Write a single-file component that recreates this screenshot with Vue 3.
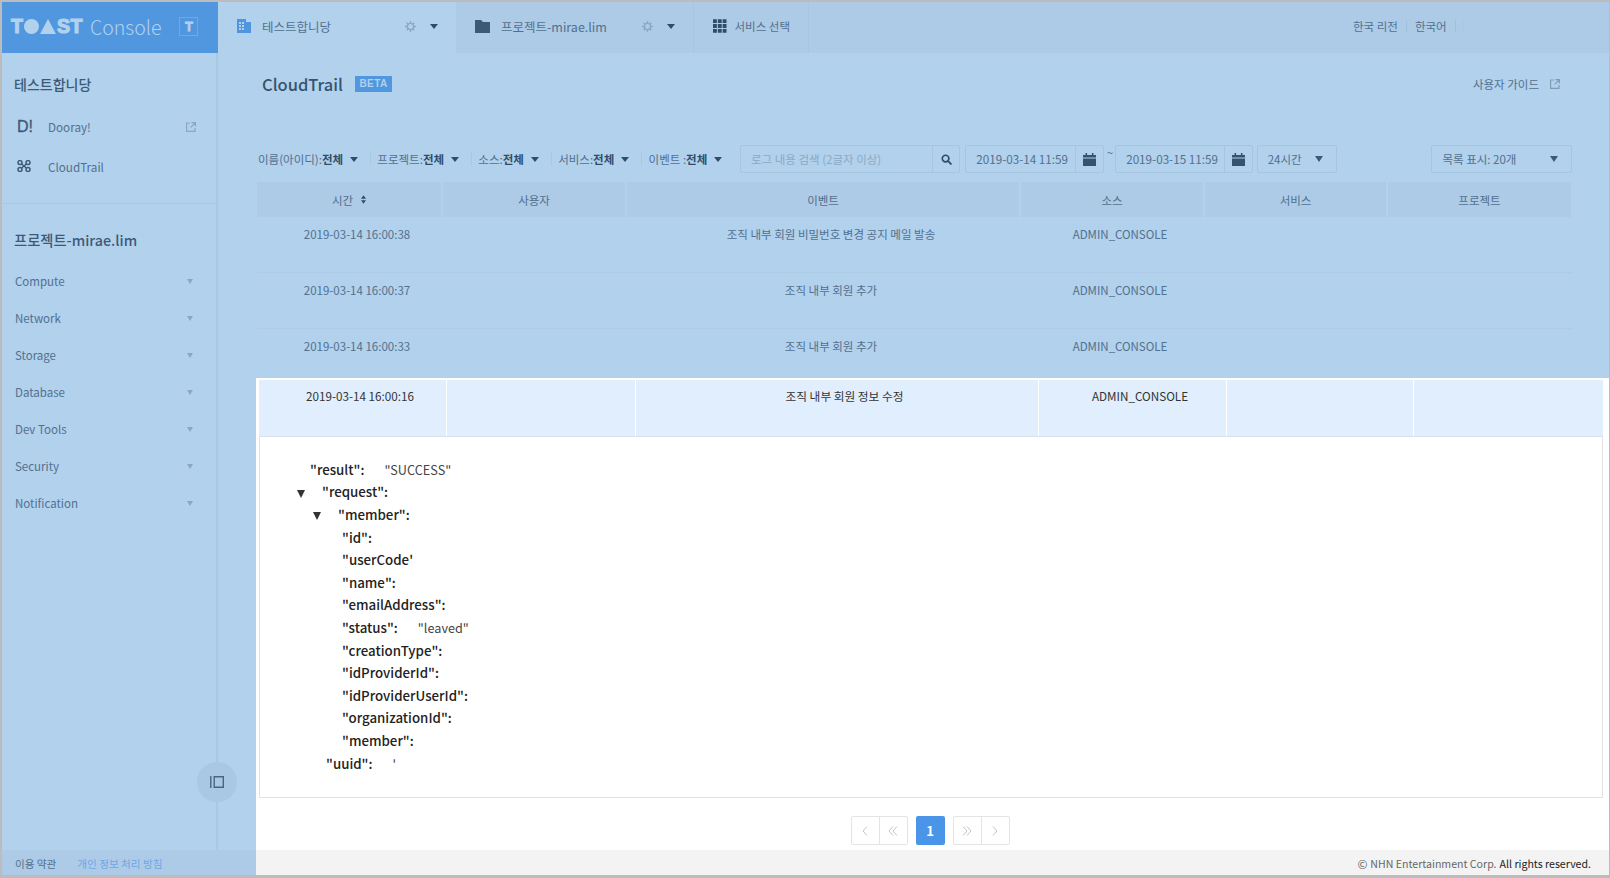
<script setup>
const tabs = [
  { name: '테스트합니당', kind: 'org' },
  { name: '프로젝트-mirae.lim', kind: 'folder' }
]

const menus = ['Compute', 'Network', 'Storage', 'Database', 'Dev Tools', 'Security', 'Notification']

const filters = [
  { label: '이름(아이디):', value: '전체' },
  { label: '프로젝트:', value: '전체' },
  { label: '소스:', value: '전체' },
  { label: '서비스:', value: '전체' },
  { label: '이벤트 :', value: '전체' }
]

const columns = ['시간', '사용자', '이벤트', '소스', '서비스', '프로젝트']

const rows = [
  { time: '2019-03-14 16:00:38', event: '조직 내부 회원 비밀번호 변경 공지 메일 발송' },
  { time: '2019-03-14 16:00:37', event: '조직 내부 회원 추가' },
  { time: '2019-03-14 16:00:33', event: '조직 내부 회원 추가' }
]

const jsonLines = [
  { left: 50, key: '"result":', value: '"SUCCESS"' },
  { left: 37, key: '"request":', arrow: true },
  { left: 53, key: '"member":', arrow: true },
  { left: 82, key: '"id":' },
  { left: 82, key: '"userCode\'' },
  { left: 82, key: '"name":' },
  { left: 82, key: '"emailAddress":' },
  { left: 82, key: '"status":', value: '"leaved"' },
  { left: 82, key: '"creationType":' },
  { left: 82, key: '"idProviderId":' },
  { left: 82, key: '"idProviderUserId":' },
  { left: 82, key: '"organizationId":' },
  { left: 82, key: '"member":' },
  { left: 66, key: '"uuid":', value: '\'' }
]
</script>

<template>
  <div class="frame">
    <header class="topbar">
      <div class="logo">
        <div class="logo-mark">
          <span>T</span><i class="dot"></i><i class="tri"></i><span>ST</span>
        </div>
        <span class="logo-text">Console</span>
        <span class="logo-box">T</span>
      </div>

      <div v-for="(tab, i) in tabs" :key="tab.name" class="tab" :class="{ 'tab-on': i === 0 }">
        <svg v-if="tab.kind === 'org'" class="tab-icon" viewBox="0 0 14 14" width="14" height="14">
          <path fill="#4f96df" d="M0 0h9v3h5v11H0z" />
          <path fill="#b2d1ec" d="M2 3h2v2H2zM5 3h2v2H5zM2 6h2v2H2zM5 6h2v2H5zM2 9h2v2H2zM5 9h2v2H5z" />
        </svg>
        <svg v-else class="tab-icon" viewBox="0 0 15 13" width="15" height="13">
          <path fill="#3c5a78" d="M0 0h6l2 2h7v11H0z" />
        </svg>
        <span class="tab-name">{{ tab.name }}</span>
        <svg class="gear" viewBox="0 0 12 12" width="11" height="11">
          <circle cx="6" cy="6" r="3.4" fill="none" stroke="#8aa7c3" stroke-width="1.5" />
          <path stroke="#8aa7c3" stroke-width="1.4" d="M6 0v2.4M6 9.6V12M0 6h2.4M9.6 6H12M1.8 1.8l1.7 1.7M8.5 8.5l1.7 1.7M1.8 10.2l1.7-1.7M8.5 3.5l1.7-1.7" />
        </svg>
        <i class="caret"></i>
      </div>

      <div class="tab tab-services">
        <svg viewBox="0 0 14 14" width="14" height="14">
          <path fill="#2f4d6b" d="M0 0h4v4H0zM5 0h4v4H5zM10 0h4v4h-4zM0 5h4v4H0zM5 5h4v4H5zM10 5h4v4h-4zM0 10h4v4H0zM5 10h4v4H5zM10 10h4v4h-4z" />
        </svg>
        <span>서비스 선택</span>
      </div>

      <div class="top-right">
        <span>한국 리전</span>
        <i class="top-sep"></i>
        <span>한국어</span>
        <i class="top-sep"></i>
        <i class="top-sep faint"></i>
      </div>
    </header>

    <div class="body">
      <aside class="sidebar">
        <h2 class="side-title">테스트합니당</h2>
        <ul class="side-links">
          <li>
            <span class="side-ico dooray">D!</span>
            <span class="side-label">Dooray!</span>
            <svg class="ext" viewBox="0 0 10 10" width="10" height="10">
              <path fill="none" stroke="#89a6c2" stroke-width="1.2" d="M4 1H.6v8.4H9V6M5.5.6h3.9v3.9M9.2.8L4.6 5.4" />
            </svg>
          </li>
          <li>
            <svg class="side-ico" viewBox="0 0 14 12" width="14" height="12">
              <g fill="none" stroke="#3c5a78" stroke-width="1.5">
                <circle cx="3" cy="2.6" r="2" />
                <circle cx="11" cy="2.6" r="2" />
                <circle cx="3" cy="9.4" r="2" />
                <circle cx="11" cy="9.4" r="2" />
                <path d="M4.6 4l4.8 4M9.4 4L4.6 8" />
              </g>
            </svg>
            <span class="side-label">CloudTrail</span>
          </li>
        </ul>
        <div class="side-divider"></div>
        <h2 class="side-title project">프로젝트-mirae.lim</h2>
        <ul class="side-menu">
          <li v-for="menu in menus" :key="menu">
            <span>{{ menu }}</span>
            <i class="caret side-caret"></i>
          </li>
        </ul>
        <button class="side-toggle" type="button">
          <svg viewBox="0 0 14 12" width="14" height="12">
            <path fill="none" stroke="#486684" stroke-width="1.4" d="M.8 0v12M4.2.7h9.1v10.6H4.2z" />
          </svg>
        </button>
      </aside>

      <main class="main">
        <div class="title-row">
          <h1>CloudTrail</h1>
          <span class="beta">BETA</span>
          <span class="guide">사용자 가이드</span>
          <svg class="guide-ext" viewBox="0 0 10 10" width="10" height="10">
            <path fill="none" stroke="#7f9cb8" stroke-width="1.2" d="M4 1H.6v8.4H9V6M5.5.6h3.9v3.9M9.2.8L4.6 5.4" />
          </svg>
        </div>

        <div class="toolbar">
          <div class="filters">
            <div v-for="f in filters" :key="f.label" class="filter">
              <span>{{ f.label }}<b>{{ f.value }}</b></span>
              <i class="caret"></i>
            </div>
          </div>

          <div class="field search">
            <span class="placeholder">로그 내용 검색 (2글자 이상)</span>
            <span class="field-btn">
              <svg viewBox="0 0 12 12" width="11" height="11">
                <circle cx="5" cy="5" r="3.6" fill="none" stroke="#2f4d6b" stroke-width="1.8" />
                <path stroke="#2f4d6b" stroke-width="2" d="M7.8 7.8L11.4 11.4" />
              </svg>
            </span>
          </div>

          <div class="field date date-from">
            <span class="date-text">2019-03-14 11:59</span>
            <span class="field-btn">
              <svg viewBox="0 0 13 13" width="13" height="13">
                <path fill="#35536f" d="M0 2h2.5V0h1.6v2h4.8V0h1.6v2H13v2.6H0zM0 5.4h13V13H0z" />
              </svg>
            </span>
          </div>
          <span class="tilde">~</span>
          <div class="field date">
            <span class="date-text">2019-03-15 11:59</span>
            <span class="field-btn">
              <svg viewBox="0 0 13 13" width="13" height="13">
                <path fill="#35536f" d="M0 2h2.5V0h1.6v2h4.8V0h1.6v2H13v2.6H0zM0 5.4h13V13H0z" />
              </svg>
            </span>
          </div>

          <div class="field select range">
            <span>24시간</span>
            <i class="caret big"></i>
          </div>
          <div class="field select perpage">
            <span>목록 표시: 20개</span>
            <i class="caret big"></i>
          </div>
        </div>

        <div class="table-head">
          <div v-for="(col, i) in columns" :key="col" class="head-cell">
            {{ col }}
            <svg v-if="i === 0" class="sort" viewBox="0 0 6 10" width="5" height="9">
              <path fill="#2f4d6b" d="M3 0l3 4H0zM3 10L0 6h6z" />
            </svg>
          </div>
        </div>

        <div class="rows">
          <div v-for="row in rows" :key="row.time + row.event" class="row">
            <span>{{ row.time }}</span>
            <span></span>
            <span>{{ row.event }}</span>
            <span>ADMIN_CONSOLE</span>
            <span></span>
            <span></span>
          </div>
        </div>

        <section class="detail">
          <div class="sel-row">
            <span>2019-03-14 16:00:16</span>
            <span></span>
            <span>조직 내부 회원 정보 수정</span>
            <span>ADMIN_CONSOLE</span>
            <span></span>
            <span></span>
          </div>

          <div class="json">
            <div v-for="(line, i) in jsonLines" :key="i" class="json-line" :style="{ paddingLeft: line.left + 'px' }">
              <i v-if="line.arrow" class="json-arrow"></i>
              <b>{{ line.key }}</b>
              <span v-if="line.value" class="json-value">{{ line.value }}</span>
            </div>
          </div>

          <nav class="pager">
            <div class="pager-group">
              <span class="pager-btn">
                <svg viewBox="0 0 6 10" width="6" height="10"><path fill="none" stroke="#c4c4c4" d="M5 .5L1 5l4 4.5" /></svg>
              </span>
              <span class="pager-btn">
                <svg viewBox="0 0 10 10" width="10" height="10"><path fill="none" stroke="#c4c4c4" d="M5 .5L1 5l4 4.5M9 .5L5 5l4 4.5" /></svg>
              </span>
            </div>
            <span class="pager-current">1</span>
            <div class="pager-group">
              <span class="pager-btn">
                <svg viewBox="0 0 10 10" width="10" height="10"><path fill="none" stroke="#c4c4c4" d="M1 .5L5 5 1 9.5M5 .5L9 5 5 9.5" /></svg>
              </span>
              <span class="pager-btn">
                <svg viewBox="0 0 6 10" width="6" height="10"><path fill="none" stroke="#c4c4c4" d="M1 .5L5 5 1 9.5" /></svg>
              </span>
            </div>
          </nav>
        </section>
      </main>
    </div>

    <footer class="bottom">
      <div class="bottom-left">
        <span>이용 약관</span>
        <a>개인 정보 처리 방침</a>
      </div>
      <div class="bottom-right">
        <span class="copy-mark">©</span> NHN Entertainment Corp. <em>All rights reserved.</em>
      </div>
    </footer>
  </div>
</template>

<style>
html,
body {
  margin: 0;
  padding: 0;
}
</style>

<style scoped>
.frame {
  box-sizing: border-box;
  width: 1610px;
  height: 878px;
  display: flex;
  flex-direction: column;
  border-style: solid;
  border-color: #bcbcbc;
  border-width: 2px 1px 3px 2px;
  background: #b2d1ec;
  color: #51708f;
  font-family: "Noto Sans CJK KR", "Noto Sans", sans-serif;
  font-size: 12.5px;
  overflow: hidden;
}

i {
  display: block;
  font-style: normal;
}

.caret {
  width: 0;
  height: 0;
  flex-shrink: 0;
  border-style: solid;
  border-width: 5px 4px 0;
  border-color: #2f4d6b transparent transparent;
}

.caret.big {
  border-width: 6px 4.5px 0;
  border-color: #3c5a78 transparent transparent;
}

/* top bar */
.topbar {
  height: 51px;
  flex-shrink: 0;
  display: flex;
  background: #adcbe6;
}

.logo {
  box-sizing: border-box;
  width: 216px;
  display: flex;
  align-items: center;
  padding: 0 0 2px 9px;
  background: #5097e0;
  color: #b2d1ec;
}

.logo-mark {
  display: flex;
  align-items: center;
  gap: 1px;
  width: 72px;
  font-family: "Liberation Sans", sans-serif;
  font-size: 19.5px;
  font-weight: 700;
  line-height: 1;
  -webkit-text-stroke: 1.2px #b2d1ec;
  letter-spacing: 0.5px;
}

.dot {
  width: 15px;
  height: 15px;
  border-radius: 50%;
  background: #b2d1ec;
}

.tri {
  width: 0;
  height: 0;
  border-style: solid;
  border-width: 0 8px 15px;
  border-color: transparent transparent #b2d1ec;
}

.logo-text {
  margin-left: 7px;
  font-size: 19.5px;
  font-weight: 300;
}

.logo-box {
  box-sizing: border-box;
  width: 19px;
  height: 19px;
  margin-left: 18px;
  border: 1px solid #6fa9e3;
  text-align: center;
  font-family: "Liberation Sans", sans-serif;
  font-size: 13px;
  font-weight: 700;
  line-height: 17px;
  -webkit-text-stroke: 0.8px #b2d1ec;
}

.tab {
  box-sizing: border-box;
  width: 238px;
  display: flex;
  align-items: center;
  padding: 0 18px 3px 19px;
  border-right: 1px solid #a8c6e1;
}

.tab-on {
  background: #b2d1ec;
  border-right: 0;
}

.tab-icon {
  flex-shrink: 0;
}

.tab-name {
  flex: 1;
  margin-left: 11px;
  font-size: 12.5px;
}

.gear {
  margin-right: 14px;
}

.tab-services {
  width: 115px;
  gap: 8px;
  font-size: 11.5px;
  white-space: nowrap;
}

.top-right {
  flex: 1;
  display: flex;
  align-items: center;
  padding: 0 0 3px 544px;
  font-size: 11.5px;
}

.top-sep {
  width: 1px;
  height: 12px;
  margin: 0 8px;
  background: #a0bfdb;
}

.top-sep.faint {
  margin-left: -1px;
  background: #a9c7e2;
}

/* body */
.body {
  flex: 1;
  min-height: 0;
  display: flex;
}

.sidebar {
  position: relative;
  box-sizing: border-box;
  width: 216px;
  flex-shrink: 0;
  border-right: 2px solid #a9c8e3;
}

.side-title {
  margin: 21px 0 0 12px;
  color: #3c5a78;
  font-size: 14px;
  font-weight: 500;
  line-height: 20px;
}

.side-title.project {
  margin-top: 26px;
  font-size: 14.3px;
}

.side-links,
.side-menu {
  margin: 0;
  padding: 0;
  list-style: none;
}

.side-links {
  margin-top: 12px;
}

.side-links li {
  position: relative;
  height: 40px;
  display: flex;
  align-items: center;
  padding-left: 15px;
}

.side-ico {
  width: 14px;
  color: #3c5a78;
}

.dooray {
  font-family: "Liberation Sans", sans-serif;
  font-size: 16px;
  font-weight: 400;
  line-height: 16px;
  padding-top: 2px;
  -webkit-text-stroke: 0.3px #3c5a78;
}

.side-label {
  margin-left: 17px;
  font-size: 11.7px;
}

.ext {
  position: absolute;
  left: 184px;
  top: 16px;
}

.side-divider {
  height: 1px;
  margin-top: 17px;
  background: #a9c8e3;
}

.side-menu {
  margin-top: 12px;
}

.side-menu li {
  height: 37px;
  display: flex;
  align-items: center;
  justify-content: space-between;
  padding: 0 23px 0 13px;
  font-size: 11.5px;
}

.side-caret {
  margin-top: 2px;
  border-width: 5px 3.5px 0;
  border-color: #8aa7c3 transparent transparent;
}

.side-toggle {
  position: absolute;
  right: -21px;
  top: 709px;
  width: 40px;
  height: 40px;
  display: flex;
  align-items: center;
  justify-content: center;
  padding: 0;
  border: 0;
  border-radius: 50%;
  background: #a9c8e3;
}

/* main */
.main {
  flex: 1;
  min-width: 0;
  display: flex;
  flex-direction: column;
  padding: 21px 37px 0 39px;
}

.title-row {
  height: 20px;
  display: flex;
  align-items: center;
  padding-left: 5px;
}

h1 {
  margin: 0;
  color: #35536f;
  font-size: 16.5px;
  font-weight: 500;
  line-height: 20px;
}

.beta {
  box-sizing: border-box;
  width: 37px;
  height: 16px;
  margin-left: 12px;
  background: #5097e0;
  color: #b2d1ec;
  text-align: center;
  font-family: "Liberation Sans", sans-serif;
  font-size: 10px;
  font-weight: 700;
  line-height: 16px;
  letter-spacing: 0.4px;
}

.guide {
  margin-left: auto;
  font-size: 11.5px;
}

.guide-ext {
  margin: 0 12px 0 11px;
}

.toolbar {
  height: 28px;
  margin-top: 51px;
  display: flex;
  align-items: center;
}

.filters {
  box-sizing: border-box;
  display: flex;
  align-items: center;
  width: 483px;
  padding-left: 1px;
}

.filter {
  display: flex;
  align-items: center;
  gap: 7px;
  padding-right: 12px;
  margin-right: 6.3px;
  font-size: 11.5px;
  white-space: nowrap;
  border-right: 1px solid #a9c8e3;
  line-height: 14px;
}

.filter:last-child {
  border-right: 0;
}

.filter b {
  color: #2f4d6b;
  font-weight: 700;
}

.field {
  box-sizing: border-box;
  height: 28px;
  display: flex;
  align-items: center;
  border: 1px solid #a7c5e0;
  border-radius: 2px;
}

.search {
  width: 221px;
}

.placeholder {
  flex: 1;
  padding-left: 10px;
  color: #8ba9c6;
  font-size: 11.5px;
}

.field-btn {
  height: 100%;
  width: 27px;
  flex-shrink: 0;
  display: flex;
  align-items: center;
  justify-content: center;
  border-left: 1px solid #a7c5e0;
}

.search .field-btn {
  width: 26px;
}

.date {
  width: 138px;
  margin-left: 5px;
}

.date-from {
  width: 139.5px;
}

.date-text {
  flex: 1;
  padding: 0 0 1px 10px;
  font-size: 11.7px;
  white-space: nowrap;
}

.tilde {
  width: 10px;
  margin-left: 1px;
  margin-right: -5px;
  font-size: 11px;
  line-height: 14px;
  align-self: flex-start;
  text-align: center;
}

.select {
  justify-content: space-between;
  font-size: 11.5px;
}

.range {
  width: 81px;
  margin-left: 4px;
  padding: 0 13px 0 10px;
}

.perpage {
  width: 141px;
  margin-left: 94px;
  padding: 0 13px 0 10px;
}

.table-head {
  height: 35px;
  margin-top: 9px;
  display: grid;
  grid-template-columns: 186px 184px 394px 184px 183px 183px;
  flex-shrink: 0;
}

.head-cell {
  display: flex;
  align-items: center;
  justify-content: center;
  gap: 8px;
  background: #adcbe6;
  border-right: 2px solid #b2d1ec;
  font-size: 11.5px;
}

.head-cell:last-child {
  border-right: 0;
}

.rows {
  height: 161px;
  flex-shrink: 0;
  overflow: hidden;
}

.row {
  box-sizing: border-box;
  height: 56px;
  display: grid;
  grid-template-columns: 186px 184px 394px 184px 183px 183px;
  padding-top: 8px;
  border-bottom: 1px solid #adcbe6;
  line-height: 18px;
}

.row span {
  padding-left: 14px;
  text-align: center;
  font-size: 11.5px;
}

/* open row */
.detail {
  flex: 1;
  min-height: 0;
  display: flex;
  flex-direction: column;
  margin: 0 -37px 0 -1px;
  padding: 2px 6px 0 3px;
  background: #fff;
  color: #333;
}

.sel-row {
  height: 56px;
  flex-shrink: 0;
  display: grid;
  grid-template-columns: 188px 189px 403px 188px 187px 189px;
  background: #e0eefe;
  line-height: 18px;
}

.sel-row span {
  box-sizing: border-box;
  padding: 7px 0 0 15px;
  border-right: 1px solid #fff;
  text-align: center;
  font-size: 11.7px;
}

.sel-row span:last-child {
  border-right: 0;
}

.json {
  box-sizing: border-box;
  height: 362px;
  flex-shrink: 0;
  padding-top: 21px;
  border: 1px solid #e2e2e2;
  border-top-color: #d8e3ee;
}

.json-line {
  position: relative;
  height: 22.6px;
  display: flex;
  align-items: center;
  font-size: 13.3px;
}

.json-line b {
  font-weight: 500;
  color: #222;
}

.json-arrow {
  width: 0;
  height: 0;
  margin-right: 17px;
  margin-top: 4px;
  border-style: solid;
  border-width: 8px 4.5px 0;
  border-color: #333 transparent transparent;
}

.json-value {
  margin-left: 20px;
  font-size: 12.7px;
  color: #444;
}

.pager {
  display: flex;
  justify-content: center;
  gap: 8px;
  margin-top: 18px;
  margin-right: 2px;
}

.pager-group {
  display: flex;
  box-sizing: border-box;
  height: 29px;
  border: 1px solid #e4e4e4;
  border-radius: 2px;
}

.pager-btn {
  width: 27px;
  display: flex;
  align-items: center;
  justify-content: center;
}

.pager-btn + .pager-btn {
  border-left: 1px solid #e4e4e4;
}

.pager-current {
  width: 29px;
  height: 29px;
  border-radius: 2px;
  background: #4a95e8;
  color: #fff;
  text-align: center;
  font-size: 13px;
  font-weight: 700;
  line-height: 29px;
}

/* footer */
.bottom {
  height: 25px;
  flex-shrink: 0;
  display: flex;
  align-items: center;
}

.bottom-left {
  box-sizing: border-box;
  width: 254px;
  height: 100%;
  display: flex;
  align-items: center;
  gap: 21px;
  padding: 1px 0 0 13px;
  background: #adcbe6;
  font-size: 10.6px;
}

.bottom-left a {
  color: #6da6e6;
}

.bottom-right {
  flex: 1;
  height: 100%;
  display: flex;
  align-items: center;
  justify-content: flex-end;
  gap: 3px;
  padding: 1px 18px 0 0;
  background: #f3f3f3;
  color: #666;
  font-size: 10.6px;
}

.bottom-right em {
  font-style: normal;
  color: #222;
}

.copy-mark {
  font-size: 12px;
}
</style>
